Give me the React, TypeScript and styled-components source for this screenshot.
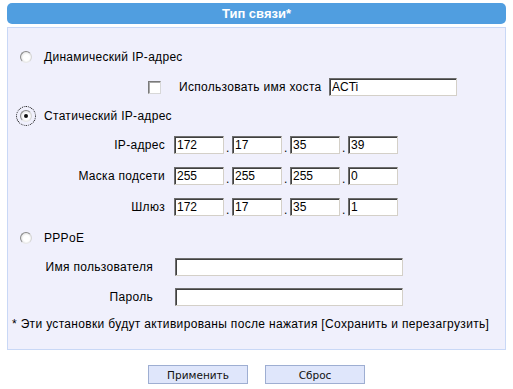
import React from "react";
import styled, { createGlobalStyle } from "styled-components";

const GlobalStyle = createGlobalStyle`
  body {
    margin: 0;
    background: #ffffff;
    font-family: "Liberation Sans", Arial, sans-serif;
    font-size: 12px;
    letter-spacing: 0.3px;
    color: #000;
  }
`;

// Page wrapper
const Page = styled.div`
  width: 499px;
  padding: 3px 7px 0;
`;

// Blue rounded title bar
const TitleBar = styled.div`
  height: 21px;
  line-height: 21px;
  border-radius: 5px;
  background: #509ee0;
  color: #fff;
  font-weight: bold;
  font-size: 13px;
  letter-spacing: 0;
  text-align: center;
`;

// Light panel holding the form
const Panel = styled.div`
  margin-top: 3px;
  border: 1px solid #c9d8f6;
  background: #f0f0fc;
  padding: 14px 0 15px;
`;

const Row = styled.div<{ $h: number; $indent?: number }>`
  display: flex;
  align-items: center;
  height: ${(p) => p.$h}px;
  padding-left: ${(p) => p.$indent ?? 0}px;
`;

// Old-style radio button
const Radio = styled.span<{ $checked?: boolean; $focused?: boolean }>`
  position: relative;
  display: inline-block;
  box-sizing: border-box;
  width: 12px;
  height: 12px;
  border-radius: 50%;
  border: 1px solid;
  border-color: #8a8a8a #d6d6d6 #e8e8e8 #8a8a8a;
  background: radial-gradient(circle at 55% 55%, #ffffff 0 38%, #ececec 62%, #c4c4c4 100%);
  outline: ${(p) => (p.$focused ? "1px dotted #000" : "none")};
  outline-offset: 3px;
  flex: none;
  &::after {
    content: "";
    display: ${(p) => (p.$checked ? "block" : "none")};
    position: absolute;
    left: 3px;
    top: 3px;
    width: 4px;
    height: 4px;
    border-radius: 50%;
    background: #111;
  }
`;

const Checkbox = styled.span`
  display: inline-block;
  width: 11px;
  height: 11px;
  border: 1px solid;
  border-color: #7a7a7a #d8d8d8 #d8d8d8 #7a7a7a;
  box-shadow: inset 1px 1px 0 #a8a8a8;
  background: #fff;
  flex: none;
`;

const OptionLabel = styled.span`
  margin-left: 12px;
`;

const CheckLabel = styled.span`
  margin-left: 18px;
  width: 150px;
  white-space: nowrap;
`;

const FieldLabel = styled.span<{ $w: number }>`
  width: ${(p) => p.$w}px;
  text-align: right;
  white-space: nowrap;
  flex: none;
`;

const TextBox = styled.input<{ $w: number; $ml?: number }>`
  box-sizing: border-box;
  width: ${(p) => p.$w}px;
  height: 18px;
  margin: 0 0 0 ${(p) => p.$ml ?? 0}px;
  padding: 0 2px;
  border: 1px solid;
  border-color: #6e6e6e #d4d0c8 #d4d0c8 #6e6e6e;
  box-shadow: inset 1px 1px 0 #404040;
  background: #fff;
  font-family: "Liberation Sans", Arial, sans-serif;
  font-size: 12px;
  color: #000;
  outline: none;
`;

const IpGroup = styled.div`
  display: flex;
  align-items: flex-end;
  margin-left: 9px;
`;

const Dot = styled.span`
  width: 8px;
  padding-left: 2px;
  box-sizing: border-box;
  line-height: 12px;
`;

const Note = styled.div`
  padding-left: 4px;
  height: 20px;
  line-height: 20px;
  white-space: nowrap;
  letter-spacing: 0.33px;
`;

const Buttons = styled.div`
  display: flex;
  justify-content: center;
  gap: 17px;
  margin-top: 15px;
`;

const Button = styled.button`
  width: 100px;
  height: 19px;
  padding: 0;
  border: 1px solid #9eaed2;
  background: #dfe6fb;
  font-family: "DejaVu Sans", Tahoma, sans-serif;
  font-size: 10.5px;
  letter-spacing: 0;
  color: #111;
`;

const IpRow = ({ label, parts, h }: { label: string; parts: string[]; h: number }) => (
  <Row $h={h}>
    <FieldLabel $w={157}>{label}</FieldLabel>
    <IpGroup>
      {parts.map((v, i) => (
        <React.Fragment key={i}>
          <TextBox $w={50} defaultValue={v} />
          {i < parts.length - 1 && <Dot>.</Dot>}
        </React.Fragment>
      ))}
    </IpGroup>
  </Row>
);

export default function App() {
  return (
    <Page>
      <GlobalStyle />
      <TitleBar>Тип связи*</TitleBar>
      <Panel>
        <Row $h={30} $indent={12}>
          <Radio />
          <OptionLabel>Динамический IP-адрес</OptionLabel>
        </Row>
        <Row $h={30} $indent={140}>
          <Checkbox />
          <CheckLabel>Использовать имя хоста</CheckLabel>
          <TextBox $w={128} defaultValue="ACTi" />
        </Row>
        <Row $h={28} $indent={12}>
          <Radio $checked $focused />
          <OptionLabel>Статический IP-адрес</OptionLabel>
        </Row>
        <IpRow h={30} label="IP-адрес" parts={["172", "17", "35", "39"]} />
        <IpRow h={32} label="Маска подсети" parts={["255", "255", "255", "0"]} />
        <IpRow h={30} label="Шлюз" parts={["172", "17", "35", "1"]} />
        <Row $h={32} $indent={12}>
          <Radio />
          <OptionLabel>PPPoE</OptionLabel>
        </Row>
        <Row $h={26}>
          <FieldLabel $w={145}>Имя пользователя</FieldLabel>
          <TextBox $w={228} $ml={22} />
        </Row>
        <Row $h={34}>
          <FieldLabel $w={145}>Пароль</FieldLabel>
          <TextBox $w={228} $ml={22} type="password" />
        </Row>
        <Note>* Эти установки будут активированы после нажатия [Сохранить и перезагрузить]</Note>
      </Panel>
      <Buttons>
        <Button>Применить</Button>
        <Button>Сброс</Button>
      </Buttons>
    </Page>
  );
}
